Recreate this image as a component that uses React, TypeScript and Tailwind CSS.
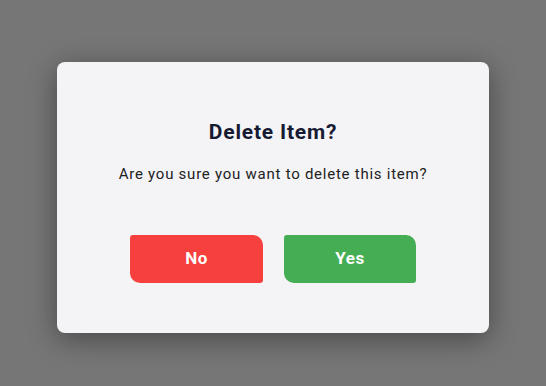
export default function App() {
  return (
    <div
      className="h-[386px] w-full bg-[#767676] flex justify-center pt-[62px] overflow-hidden"
      style={{ fontFamily: "Roboto, 'Noto Sans', sans-serif" }}
    >
      <div className="w-[432px] h-[271px] rounded-[8px] bg-[#f4f4f6] shadow-[0_6px_28px_rgba(0,0,0,0.4)] flex flex-col items-center pt-[56px]">
        <h2 className="text-[21px] leading-[28px] font-bold tracking-[0.8px] text-[#161b33]">Delete Item?</h2>
        <p className="mt-[18px] text-[15px] leading-[20px] tracking-[0.75px] text-[#222]">
          Are you sure you want to delete this item?
        </p>
        <div className="mt-[51px] flex gap-[21px]">
          <button className="w-[133px] h-[48px] bg-[#f5403d] text-white font-bold text-[17px] tracking-[0.5px] rounded-tl-[3px] rounded-tr-[10px] rounded-br-[3px] rounded-bl-[10px]">
            No
          </button>
          <button className="w-[132px] h-[48px] bg-[#45ae55] text-white font-bold text-[17px] tracking-[0.5px] rounded-tl-[3px] rounded-tr-[10px] rounded-br-[3px] rounded-bl-[10px]">
            Yes
          </button>
        </div>
      </div>
    </div>
  );
}
